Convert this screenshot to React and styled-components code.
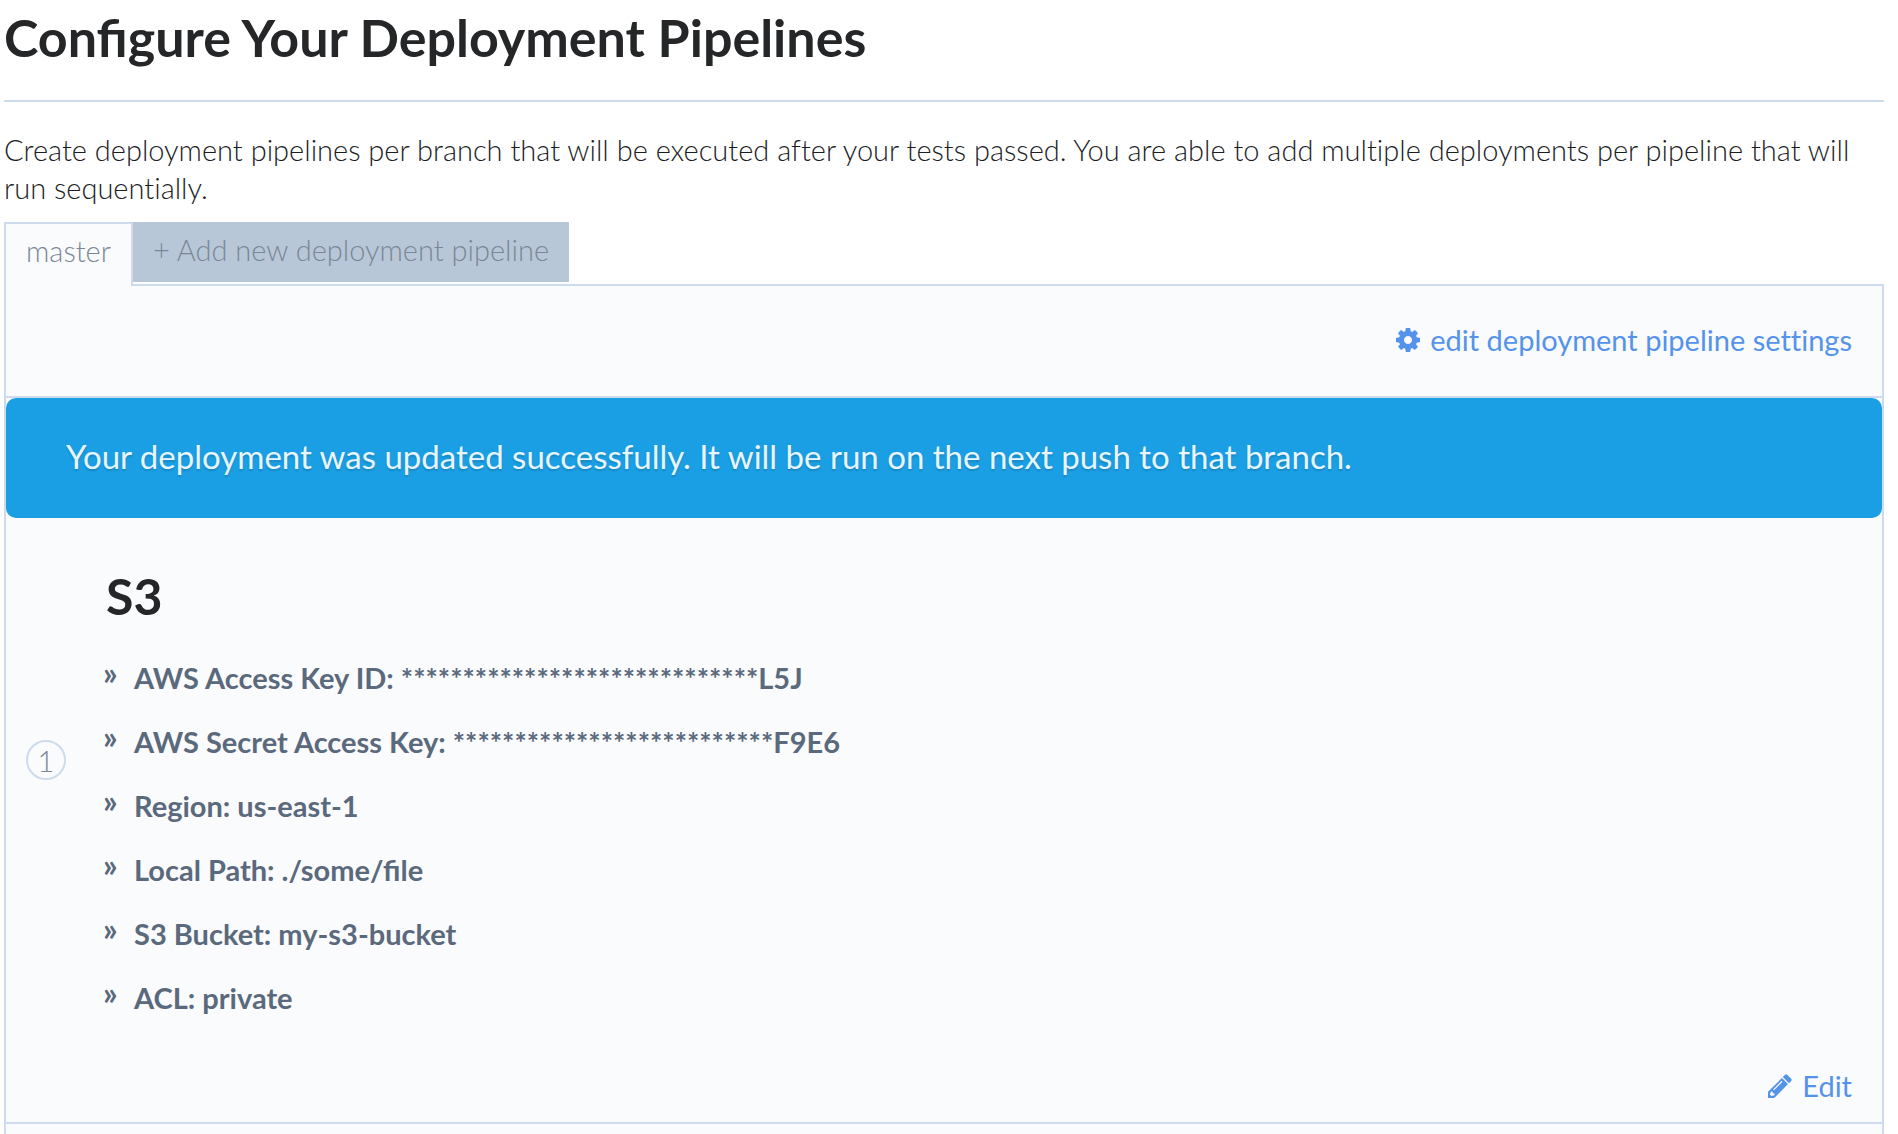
import React from "react";
import styled, { createGlobalStyle } from "styled-components";

const colors = {
  ink: "#242628",
  muted: "#7b8796",
  slate: "#5b697c",
  line: "#cddbed",
  panel: "#fafbfd",
  link: "#5593eb",
  notice: "#1b9fe4",
};

const GlobalStyle = createGlobalStyle`
  *, *::before, *::after { box-sizing: border-box; }
  body {
    margin: 0;
    background: #fff;
    color: ${colors.ink};
    font-family: Lato, "Open Sans", sans-serif;
    font-size: 29px;
    font-weight: 300;
    line-height: 38px;
    font-variant-ligatures: none;
  }
`;

const Page = styled.main`
  display: flex;
  flex-direction: column;
  min-height: 100vh;
  padding: 7px 14px 0 4px;
`;

const PageTitle = styled.h1`
  margin: 0;
  padding-bottom: 33px;
  border-bottom: 2px solid ${colors.line};
  font-size: 52px;
  font-weight: 700;
  line-height: 60px;
  font-variant-ligatures: normal;
`;

const Intro = styled.p`
  margin: 29px 0 15px;
  color: #1b1d1f;
`;

const Tabs = styled.nav`
  display: flex;
  align-items: flex-start;
`;

const Tab = styled.button`
  position: relative;
  margin: 0 0 -2px;
  padding: 8px 20px 16px;
  border: 2px solid ${colors.line};
  border-bottom: 0;
  background: ${colors.panel};
  color: ${colors.muted};
  font: inherit;
  cursor: pointer;
`;

const AddTab = styled.button`
  margin: 0 0 2px;
  padding: 9px 20px 13px;
  border: 0;
  background: #b8c7d7;
  color: ${colors.muted};
  font: inherit;
  cursor: pointer;
`;

const Panel = styled.section`
  flex: 1;
  border: 2px solid ${colors.line};
  border-bottom: 0;
  background: ${colors.panel};
`;

const PanelHeader = styled.header`
  display: flex;
  justify-content: flex-end;
  padding: 35px 30px 37px;
  border-bottom: 2px solid ${colors.line};
`;

const ActionLink = styled.a`
  display: flex;
  align-items: center;
  gap: 10px;
  color: ${colors.link};
  font-weight: 400;
  text-decoration: none;

  svg {
    width: 24px;
    height: 24px;
    fill: currentColor;
  }
`;

const Notice = styled.div`
  padding: 38px 60px 42px;
  border-radius: 10px;
  background: ${colors.notice};
  color: #e8f5fd;
  font-size: 33px;
  font-weight: 400;
  line-height: 40px;
  text-shadow: 0 2px 2px rgba(0, 0, 0, 0.15);
`;

const Deployment = styled.article`
  border-bottom: 2px solid ${colors.line};
`;

const DeploymentBody = styled.div`
  display: flex;
  align-items: center;
  gap: 37px;
  padding-left: 20px;
`;

const StepColumn = styled.div`
  padding-bottom: 15px;
`;

const StepNumber = styled.span`
  display: flex;
  align-items: center;
  justify-content: center;
  width: 40px;
  height: 40px;
  padding-top: 2px;
  border: 2px solid ${colors.line};
  border-radius: 50%;
  color: ${colors.muted};
`;

const Details = styled.div`
  padding-top: 50px;
`;

const DeploymentName = styled.h2`
  margin: 0 0 35px;
  padding-left: 3px;
  font-size: 50px;
  font-weight: 700;
  line-height: 56px;
`;

const Settings = styled.ul`
  display: grid;
  gap: 26px;
  margin: 0;
  padding: 0;
  list-style: none;
`;

const Setting = styled.li`
  display: flex;
  color: ${colors.slate};
  font-weight: 700;
  font-variant-ligatures: normal;

  &::before {
    content: "»";
    width: 31px;
    font-size: 32px;
    line-height: 28px;
  }
`;

const DeploymentFooter = styled.footer`
  display: flex;
  justify-content: flex-end;
  padding: 50px 30px 17px;
`;

const CogIcon = () => (
  <svg viewBox="0 128 1536 1536" aria-hidden="true">
    <path d="M1024 896q0-106-75-181t-181-75-181 75-75 181 75 181 181 75 181-75 75-181zm512-109v222q0 12-8 23t-20 13l-185 28q-19 54-39 91 35 50 107 138 10 12 10 25t-9 23q-27 37-99 108t-94 71q-12 0-26-9l-138-108q-44 23-91 38-16 136-29 186-7 28-36 28h-222q-14 0-24.500-8.500t-11.500-21.500l-28-184q-49-16-90-37l-141 107q-10 9-25 9-14 0-25-11-126-114-165-168-7-10-7-23 0-12 8-23 15-21 51-66.500t54-70.500q-27-50-41-99l-183-27q-13-2-21-12.500t-8-23.500v-222q0-12 8-23t19-13l186-28q14-46 39-92-40-57-107-138-10-12-10-24 0-10 9-23 26-36 98.500-107.500t94.500-71.500q13 0 26 10l138 107q44-23 91-38 16-136 29-186 7-28 36-28h222q14 0 24.500 8.500t11.500 21.500l28 184q49 16 90 37l142-107q9-9 24-9 13 0 25 10 129 119 165 170 7 8 7 22 0 12-8 23-15 21-51 66.500t-54 70.500q26 50 41 98l183 28q13 2 21 12.500t8 23.500z" />
  </svg>
);

const PencilIcon = () => (
  <svg viewBox="0 0 24 24" aria-hidden="true">
    <path
      fillRule="evenodd"
      d="M16.800 1q1.300-1.300 2.700 0l3.500 3.500q1.300 1.300 0 2.700L21 9.200 14.800 3zM13.900 4l6.100 6.100L7 23.200 6.200 24H0V17.800zM13.600 6.800l-8.600 8.600.9.9 8.600-8.600zM2.800 17.800l-.9 2.600 1.700 1.700 2.800-.8.2-1.800-1.700-.2-.3-1.800z"
    />
  </svg>
);

const settings = [
  ["AWS Access Key ID", `${"*".repeat(29)}L5J`],
  ["AWS Secret Access Key", `${"*".repeat(26)}F9E6`],
  ["Region", "us-east-1"],
  ["Local Path", "./some/file"],
  ["S3 Bucket", "my-s3-bucket"],
  ["ACL", "private"],
];

export default function App() {
  return (
    <>
      <GlobalStyle />
      <Page>
        <PageTitle>Configure Your Deployment Pipelines</PageTitle>
        <Intro>
          Create deployment pipelines per branch that will be executed after your tests passed. You
          are able to add multiple deployments per pipeline that will run sequentially.
        </Intro>
        <Tabs>
          <Tab type="button">master</Tab>
          <AddTab type="button">+ Add new deployment pipeline</AddTab>
        </Tabs>
        <Panel>
          <PanelHeader>
            <ActionLink href="#settings">
              <CogIcon />
              edit deployment pipeline settings
            </ActionLink>
          </PanelHeader>
          <Notice role="status">
            Your deployment was updated successfully. It will be run on the next push to that
            branch.
          </Notice>
          <Deployment>
            <DeploymentBody>
              <StepColumn>
                <StepNumber>1</StepNumber>
              </StepColumn>
              <Details>
                <DeploymentName>S3</DeploymentName>
                <Settings>
                  {settings.map(([name, value]) => (
                    <Setting key={name}>{`${name}: ${value}`}</Setting>
                  ))}
                </Settings>
              </Details>
            </DeploymentBody>
            <DeploymentFooter>
              <ActionLink href="#edit">
                <PencilIcon />
                Edit
              </ActionLink>
            </DeploymentFooter>
          </Deployment>
        </Panel>
      </Page>
    </>
  );
}
